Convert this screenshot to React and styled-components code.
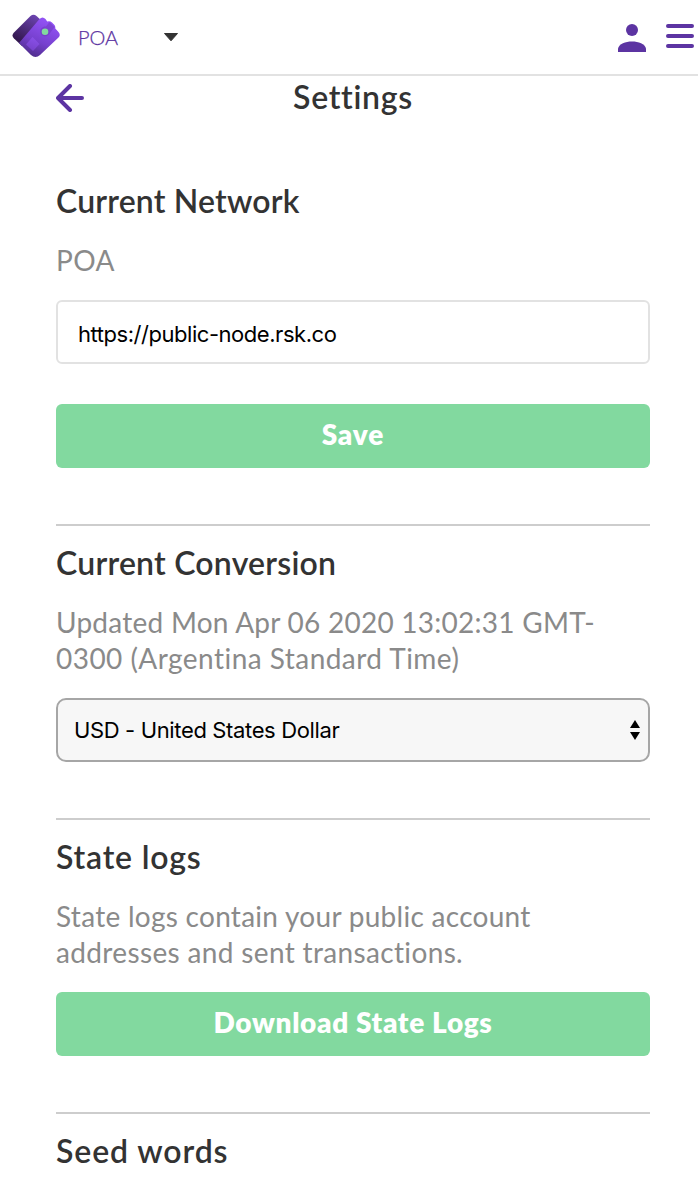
import React from 'react';
import styled, { createGlobalStyle } from 'styled-components';

const GlobalStyle = createGlobalStyle`
  * { box-sizing: border-box; }
  body { margin: 0; background: #fff; overflow: hidden; }
`;

const Page = styled.div`
  height: 1178px;
  overflow: hidden;
  background: #fff;
  color: #333;
  font-family: Lato, 'Open Sans', sans-serif;
  font-variant-ligatures: none;
`;

const Header = styled.header`
  display: flex;
  align-items: flex-start;
  height: 76px;
  padding: 14px 4px 0 12px;
  border-bottom: 2px solid #e2e2e2;
`;

const NetworkName = styled.span`
  width: 85px;
  margin: 9px 0 0 18px;
  color: #5c34a2;
  font-size: 20px;
  font-weight: 300;
  line-height: 28px;
  -webkit-text-stroke: 0.25px #5c34a2;
`;

const HeaderActions = styled.div`
  display: flex;
  align-items: flex-start;
  gap: 20px;
  margin-left: auto;
`;

const Icon = styled.svg`
  display: block;
  flex: none;
  margin-top: ${(p) => p.$top || 0}px;
`;

const TitleBar = styled.div`
  display: grid;
  grid-template-columns: 28px 1fr 28px;
  align-items: center;
  height: 44px;
  padding: 0 48px 0 56px;
`;

const Title = styled.h1`
  margin: 0;
  padding-bottom: 3px;
  text-align: center;
  font-size: 32px;
  font-weight: 600;
  line-height: 41px;
  letter-spacing: 0.7px;
`;

const Content = styled.main`
  padding: 42px 48px 0 56px;
`;

const Section = styled.section`
  padding: 18px 0 56px;
  border-top: 2px solid ${(p) => (p.$first ? 'transparent' : '#cdcdcd')};
`;

const Heading = styled.h2`
  margin: 0 0 22px;
  font-size: 32px;
  font-weight: 600;
  line-height: 38px;
  letter-spacing: ${(p) => p.$spacing || 0}px;
`;

const Description = styled.p`
  margin: 0 0 22px;
  color: #8a8a8a;
  font-size: 28px;
  line-height: 36px;
  white-space: nowrap;
`;

const Line = styled.span`
  display: block;
  letter-spacing: ${(p) => p.$spacing || 0}px;
`;

const UrlInput = styled.input`
  display: block;
  width: 100%;
  height: 64px;
  margin-bottom: 40px;
  padding: 4px 20px 0;
  border: 2px solid #e2e2e2;
  border-radius: 6px;
  background: #fff;
  color: #000;
  font-family: Inter, sans-serif;
  font-size: 22px;
  letter-spacing: -0.46px;
  outline: none;
`;

const SelectBox = styled.div`
  display: flex;
  align-items: center;
  justify-content: space-between;
  height: 64px;
  padding: 0 8px 0 16px;
  border: 2px solid #a6a6a6;
  border-radius: 10px;
  background: #f7f7f7;
  color: #000;
  font-family: Inter, sans-serif;
  font-size: 22px;
  letter-spacing: -0.36px;
`;

const Button = styled.button`
  display: block;
  width: 100%;
  height: 64px;
  padding: 0 0 4px;
  border: 0;
  border-radius: 6px;
  background: #82d99f;
  color: #fff;
  font-family: inherit;
  font-size: 28px;
  font-weight: 800;
  letter-spacing: ${(p) => p.$spacing || 0}px;
`;

function WalletLogo() {
  return (
    <Icon width="48" height="44" viewBox="12 14 48 44">
      <defs>
        <linearGradient id="walletBack" x1="33" y1="15" x2="18" y2="40" gradientUnits="userSpaceOnUse">
          <stop offset="0" stopColor="#6a42ad" />
          <stop offset="1" stopColor="#33184f" />
        </linearGradient>
        <linearGradient id="walletFront" x1="48" y1="22" x2="32" y2="58" gradientUnits="userSpaceOnUse">
          <stop offset="0" stopColor="#9152f3" />
          <stop offset="0.55" stopColor="#7640ce" />
          <stop offset="1" stopColor="#4c2c87" />
        </linearGradient>
        <linearGradient id="walletPatch" x1="34" y1="37" x2="29" y2="51" gradientUnits="userSpaceOnUse">
          <stop offset="0" stopColor="#8a50e8" />
          <stop offset="1" stopColor="#7440c8" />
        </linearGradient>
      </defs>
      <path d="M30.500 16Q33.500 13.500 36.500 16L42 21L22 46L14 38.500Q11 35.500 14 32.500Z" fill="url(#walletBack)" />
      <path d="M19 43L39.500 19Q42.500 16 45.500 19L47.200 21.500Q50 20.500 52 22.500L54.500 25Q55.500 26.500 55.300 28.500L58.500 32Q61 35 58.500 37.500L40 55Q35.500 59 31 55Z" fill="url(#walletFront)" />
      <path d="M32.500 37L39.500 44L33 51L26 44.500Z" fill="url(#walletPatch)" />
      <path d="M40.300 31.500C40.300 28 43 26.500 46 26.500L49.500 22L54.500 27L49 34.500C46 38 40.300 36 40.300 31.500Z" fill="#6431ae" opacity=".4" />
      <circle cx="45" cy="31.700" r="3.300" fill="#82d99f" />
    </Icon>
  );
}

export default function App() {
  return (
    <Page>
      <GlobalStyle />
      <Header>
        <WalletLogo />
        <NetworkName>POA</NetworkName>
        <Icon $top={18} width="16" height="10" viewBox="0 0 16 10">
          <path d="M1.500 1.500H14.500L8 8.800Z" fill="#333" stroke="#333" strokeLinejoin="round" />
        </Icon>
        <HeaderActions>
          <Icon $top={10} width="28" height="28" viewBox="0 0 28 28" fill="#5c34a2">
            <circle cx="14" cy="6" r="6" />
            <path d="M0 28V24.500C1 20 7.500 17.500 14 17.500S27 20 28 24.500V28Z" />
          </Icon>
          <Icon $top={8} width="28" height="28" viewBox="0 0 28 28" stroke="#5c34a2" strokeWidth="4" strokeLinecap="round">
            <path d="M2 4H26M2 14H26M2 24H26" />
          </Icon>
        </HeaderActions>
      </Header>
      <TitleBar>
        <Icon width="28" height="28" viewBox="0 0 28 28" fill="none" stroke="#5c34a2" strokeWidth="4" strokeLinecap="round" strokeLinejoin="round">
          <path d="M14 2L2 14L14 26M2 14H26" />
        </Icon>
        <Title>Settings</Title>
      </TitleBar>
      <Content>
        <Section $first>
          <Heading $spacing={0.17}>Current Network</Heading>
          <Description><Line $spacing={0.4}>POA</Line></Description>
          <UrlInput defaultValue="https://public-node.rsk.co" />
          <Button $spacing={0.9}>Save</Button>
        </Section>
        <Section>
          <Heading $spacing={0.22}>Current Conversion</Heading>
          <Description>
            <Line $spacing={0.25}>Updated Mon Apr 06 2020 13:02:31 GMT-</Line>
            <Line $spacing={0.46}>0300 (Argentina Standard Time)</Line>
          </Description>
          <SelectBox>
            <span>USD - United States Dollar</span>
            <Icon width="10" height="20" viewBox="0 0 10 20">
              <path d="M0 8L5 0L10 8ZM0 12H10L5 20Z" fill="#000" />
            </Icon>
          </SelectBox>
        </Section>
        <Section>
          <Heading $spacing={0.8}>State logs</Heading>
          <Description>
            <Line $spacing={0.28}>State logs contain your public account</Line>
            <Line $spacing={0.35}>addresses and sent transactions.</Line>
          </Description>
          <Button $spacing={0.65}>Download State Logs</Button>
        </Section>
        <Section>
          <Heading $spacing={0.9}>Seed words</Heading>
        </Section>
      </Content>
    </Page>
  );
}
